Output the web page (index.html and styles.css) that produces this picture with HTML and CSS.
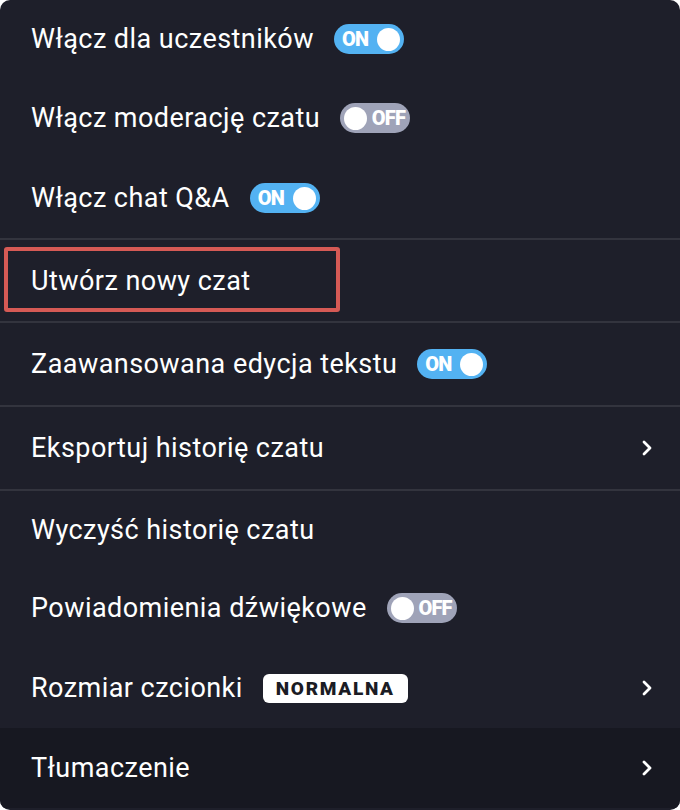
FILE: index.html
```html
<!DOCTYPE html>
<html lang="pl">
<head>
    <meta charset="UTF-8">
    <meta name="viewport" content="width=device-width, initial-scale=1.0">
    <title>Ustawienia czatu</title>
    <link rel="stylesheet" href="styles.css">
</head>
<body>
    <div class="panel">
        <div class="group first">
            <div class="row r1">
                <span class="label">Włącz dla uczestników</span>
                <span class="toggle on"><span class="state">ON</span><span class="knob"></span></span>
            </div>
            <div class="row">
                <span class="label">Włącz moderację czatu</span>
                <span class="toggle off"><span class="knob"></span><span class="state">OFF</span></span>
            </div>
            <div class="row">
                <span class="label">Włącz chat Q&amp;A</span>
                <span class="toggle on"><span class="state">ON</span><span class="knob"></span></span>
            </div>
        </div>

        <div class="group">
            <div class="row single">
                <span class="label">Utwórz nowy czat</span>
            </div>
            <div class="highlight"></div>
        </div>

        <div class="group">
            <div class="row single wide">
                <span class="label">Zaawansowana edycja tekstu</span>
                <span class="toggle on"><span class="state">ON</span><span class="knob"></span></span>
            </div>
        </div>

        <div class="group">
            <div class="row single wide">
                <span class="label">Eksportuj historię czatu</span>
                <svg class="chevron" width="14" height="20" viewBox="0 0 14 20"><path d="M4 4l6 6-6 6" fill="none" stroke="#fff" stroke-width="2.8" stroke-linecap="round" stroke-linejoin="round"/></svg>
            </div>
        </div>

        <div class="group last">
            <div class="row r7">
                <span class="label">Wyczyść historię czatu</span>
            </div>
            <div class="row">
                <span class="label">Powiadomienia dźwiękowe</span>
                <span class="toggle off"><span class="knob"></span><span class="state">OFF</span></span>
            </div>
            <div class="row">
                <span class="label">Rozmiar czcionki</span>
                <span class="badge">NORMALNA</span>
                <svg class="chevron" width="14" height="20" viewBox="0 0 14 20"><path d="M4 4l6 6-6 6" fill="none" stroke="#fff" stroke-width="2.8" stroke-linecap="round" stroke-linejoin="round"/></svg>
            </div>
            <div class="row active">
                <span class="label">Tłumaczenie</span>
                <svg class="chevron" width="14" height="20" viewBox="0 0 14 20"><path d="M4 4l6 6-6 6" fill="none" stroke="#fff" stroke-width="2.8" stroke-linecap="round" stroke-linejoin="round"/></svg>
            </div>
        </div>
    </div>
</body>
</html>
```

FILE: styles.css
```css
body {
    margin: 0;
    background: #ffffff;
    font-family: Roboto, "Liberation Sans", sans-serif;
}
.panel {
    width: 680px;
    height: 810px;
    background: #1e1f2a;
    border-radius: 10px;
    overflow: hidden;
    color: #ffffff;
}
.group {
    position: relative;
    border-top: 2px solid #33343e;
}
.group.first {
    border-top: none;
}
.row {
    display: flex;
    align-items: center;
    gap: 20px;
    height: 80px;
    padding: 0 31px;
}
.row.r1 {
    height: 78px;
}
.row.single {
    height: 81px;
}
.row.wide {
    height: 82px;
}
.row.r7 {
    height: 77px;
}
.row.active {
    background: #171821;
}
.label {
    font-size: 27px;
    letter-spacing: 0.45px;
}
.toggle {
    display: flex;
    align-items: center;
    height: 30px;
    padding: 0 4px;
    border-radius: 15px;
    box-sizing: border-box;
    width: 70px;
    justify-content: space-between;
}
.toggle.on {
    background: #53b2f2;
    padding-left: 8px;
}
.toggle.off {
    background: #9fa3b8;
    padding-right: 5px;
}
.state {
    font-size: 20px;
    font-weight: 900;
    letter-spacing: -0.8px;
}
.knob {
    width: 23px;
    height: 23px;
    border-radius: 50%;
    background: #ffffff;
}
.badge {
    background: #ffffff;
    color: #1b1c24;
    font-size: 19px;
    font-weight: 900;
    letter-spacing: 1.7px;
    padding: 3px 13px;
    border-radius: 6px;
}
.chevron {
    margin-left: auto;
    margin-right: -5px;
}
.highlight {
    position: absolute;
    left: 4px;
    top: 7px;
    width: 328px;
    height: 57px;
    border: 4px solid #d65a55;
    border-radius: 3px;
}
```
